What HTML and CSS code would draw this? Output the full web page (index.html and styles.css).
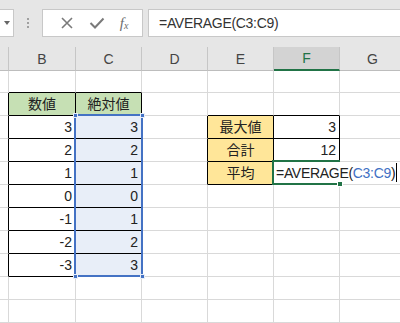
FILE: index.html
```html
<!DOCTYPE html>
<html lang="ja">
<head>
  <meta charset="UTF-8">
  <title>AVERAGE</title>
  <link rel="stylesheet" href="styles.css">
</head>
<body>
  <div class="toolbar">
    <div class="name-box"><span class="caret"></span></div>
    <div class="grip"><i></i><i></i><i></i></div>
    <div class="fx-buttons">
      <svg class="btn" width="14" height="14" viewBox="0 0 14 14"><path d="M2 2 L12 12 M12 2 L2 12" stroke="#7a7a7a" stroke-width="1.6" fill="none"/></svg>
      <svg class="btn" width="16" height="14" viewBox="0 0 16 14"><path d="M1.5 7 L6 11.5 L14.5 2.5" stroke="#7a7a7a" stroke-width="2" fill="none"/></svg>
      <span class="fx">f<sub>x</sub></span>
    </div>
    <div class="formula-input">=AVERAGE(C3:C9)</div>
  </div>

  <div class="sheet">
    <table class="grid">
      <colgroup>
        <col class="col-a"><col class="col"><col class="col"><col class="col"><col class="col"><col class="col"><col class="col">
      </colgroup>
      <thead>
        <tr>
          <th></th><th>B</th><th>C</th><th>D</th><th>E</th><th class="sel">F</th><th>G</th>
        </tr>
      </thead>
      <tbody>
        <tr class="r1"><td></td><td class="above"></td><td class="above"></td><td></td><td></td><td></td><td></td></tr>
        <tr><td class="left"></td><td class="box head-green">数値</td><td class="box head-green">絶対値</td><td></td><td class="above"></td><td class="above"></td><td></td></tr>
        <tr><td class="left"></td><td class="box num">3</td><td class="box num ref">3</td><td class="left"></td><td class="box head-orange">最大値</td><td class="box num">3</td><td></td></tr>
        <tr><td class="left"></td><td class="box num">2</td><td class="box num ref">2</td><td class="left"></td><td class="box head-orange">合計</td><td class="box num">12</td><td></td></tr>
        <tr><td class="left"></td><td class="box num">1</td><td class="box num ref">1</td><td class="left"></td><td class="box head-orange">平均</td><td class="box editing">=AVERAGE(<span class="ref-text">C3:C9</span>)</td><td class="overflow"></td></tr>
        <tr><td class="left"></td><td class="box num">0</td><td class="box num ref">0</td><td></td><td></td><td></td><td></td></tr>
        <tr><td class="left"></td><td class="box num">-1</td><td class="box num ref">1</td><td></td><td></td><td></td><td></td></tr>
        <tr><td class="left"></td><td class="box num">-2</td><td class="box num ref">2</td><td></td><td></td><td></td><td></td></tr>
        <tr><td class="left"></td><td class="box num">-3</td><td class="box num ref">3</td><td></td><td></td><td></td><td></td></tr>
        <tr><td></td><td></td><td></td><td></td><td></td><td></td><td></td></tr>
        <tr><td></td><td></td><td></td><td></td><td></td><td></td><td></td></tr>
      </tbody>
    </table>

    <!-- range referenced by the formula being typed -->
    <div class="range-ref">
      <span class="knob tl"></span><span class="knob tr"></span>
      <span class="knob bl"></span><span class="knob br"></span>
    </div>
    <!-- active cell with fill handle and text cursor -->
    <div class="active-cell"><span class="fill-handle"></span></div>
    <div class="caret-line"></div>
  </div>
</body>
</html>
```

FILE: styles.css
```css
* { box-sizing: border-box; }

body {
  margin: 0;
  width: 400px;
  height: 323px;
  overflow: hidden;
  background: #fff;
  font-family: "Liberation Sans", "Noto Sans CJK JP", sans-serif;
  color: #222;
}

/* formula bar */
.toolbar {
  height: 47px;
  background: #e6e6e6;
  display: flex;
  align-items: center;
  padding-bottom: 1px;
}

.name-box {
  width: 15px;
  height: 28px;
  margin-left: -1px;
  background: #fff;
  border: 1px solid #c8c8c8;
  display: flex;
  align-items: center;
  justify-content: center;
}

.caret {
  width: 0;
  height: 0;
  border-left: 3px solid transparent;
  border-right: 3px solid transparent;
  border-top: 4px solid #666;
}

.grip {
  width: 28px;
  display: flex;
  flex-direction: column;
  align-items: center;
  gap: 2px;
}

.grip i {
  width: 2px;
  height: 2px;
  background: #a0a0a0;
}

.fx-buttons {
  width: 101px;
  height: 28px;
  background: #fff;
  border: 1px solid #c8c8c8;
  display: flex;
  align-items: center;
  justify-content: space-around;
  padding: 0 6px 0 9px;
}

.fx {
  font-family: "Liberation Serif", serif;
  font-style: italic;
  font-size: 15px;
  color: #6d6d6d;
  line-height: 1;
}

.fx sub {
  font-size: 10px;
  vertical-align: -1px;
}

.formula-input {
  flex: 1;
  height: 28px;
  margin-left: 5px;
  margin-right: -5px;
  background: #fff;
  border: 1px solid #c8c8c8;
  padding-left: 10px;
  font-size: 14px;
  line-height: 26px;
  color: #333;
  letter-spacing: -0.3px;
}

/* sheet grid */
.sheet {
  position: relative;
  width: 400px;
  overflow: hidden;
}

.grid {
  table-layout: fixed;
  border-collapse: separate;
  border-spacing: 0;
  width: 405px;
}

.col-a { width: 9px; }
.col { width: 66px; }
.grid col:nth-child(2) { width: 67px; }

.grid th {
  height: 24px;
  background: #e6e6e6;
  border-right: 1px solid #c6c6c6;
  border-bottom: 1px solid #bdbdbd;
  font-weight: normal;
  font-size: 14px;
  color: #444;
  padding: 0;
}

.grid th.sel {
  background: #d3d3d3;
  color: #217346;
  border-bottom: 2px solid #217346;
}

.grid td {
  height: 23px;
  border-right: 1px solid #d9d9d9;
  border-bottom: 1px solid #d9d9d9;
  padding: 0 3px 1px;
  font-size: 14px;
  line-height: 20px;
  white-space: nowrap;
  text-align: center;
  vertical-align: bottom;
}

.grid tr.r1 td { height: 22px; }

.grid td.above { border-bottom-color: #000; }
.grid td.left { border-right-color: #000; }
.grid td.box { border-right-color: #000; border-bottom-color: #000; }

.head-green { background: #c6e0b4; }
.head-orange { background: #ffe699; }
.grid td.num { text-align: right; }
.grid td.ref { background: #e8eef8; }

.grid td.editing {
  text-align: left;
  overflow: visible;
  padding-left: 2px;
  border-right-color: #fff;
  letter-spacing: -0.3px;
}

.ref-text { color: #3e70c4; }

.grid td.overflow { border-bottom-color: #d9d9d9; }

.range-ref {
  position: absolute;
  left: 74px;
  top: 67px;
  width: 69px;
  height: 163px;
  border: 2px solid #4472c4;
}

.knob {
  position: absolute;
  width: 5px;
  height: 5px;
  background: #4472c4;
  border: 1px solid #e8eef8;
}

.knob.tl { left: -3.5px; top: -3.5px; }
.knob.tr { right: -3.5px; top: -3.5px; }
.knob.bl { left: -3.5px; bottom: -3.5px; }
.knob.br { right: -3.5px; bottom: -3.5px; }

.active-cell {
  position: absolute;
  left: 272px;
  top: 113px;
  width: 68px;
  height: 25px;
  border: 2px solid #217346;
  border-right: none;
}

.fill-handle {
  position: absolute;
  right: -3px;
  bottom: -4px;
  width: 6px;
  height: 6px;
  background: #217346;
  border: 1px solid #fff;
}

.caret-line {
  position: absolute;
  left: 396px;
  top: 116px;
  width: 1px;
  height: 19px;
  background: #000;
}
```
